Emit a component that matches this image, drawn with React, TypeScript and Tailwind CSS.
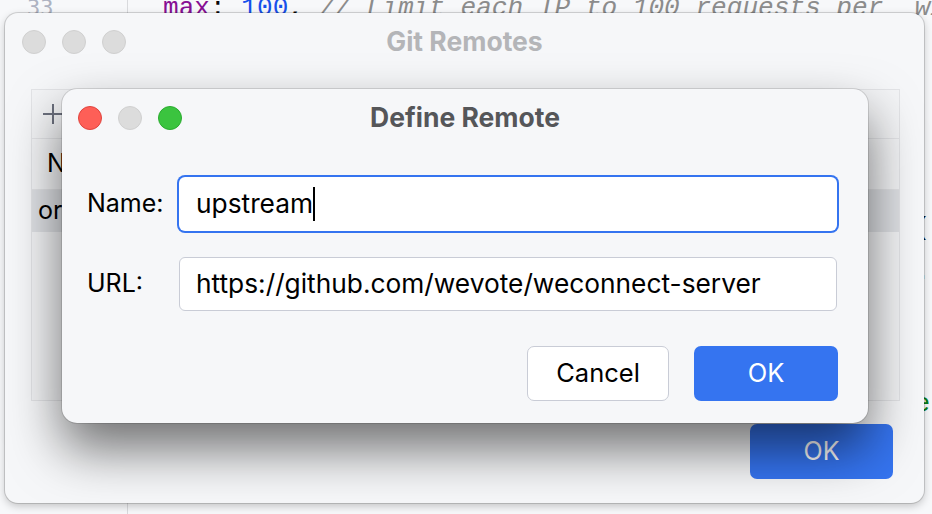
import React from "react";

/** Traffic light buttons in a macOS title bar */
function TrafficLights({ active }: { active: boolean }) {
  const dot = "h-[24px] w-[24px] rounded-full border";
  return (
    <div className="flex items-center gap-[16px]">
      <span
        className={
          active
            ? `${dot} border-[#e0443e] bg-[#fe5f57]`
            : `${dot} border-[#d0d0d0] bg-[#dcdcdc]`
        }
      />
      <span className={`${dot} border-[#d0d0d0] bg-[#dcdcdc]`} />
      <span
        className={
          active
            ? `${dot} border-[#2aac2f] bg-[#3bc43f]`
            : `${dot} border-[#d0d0d0] bg-[#dcdcdc]`
        }
      />
    </div>
  );
}

// editor lines behind the dialogs; only the edges peek out
const codeLines: { n: number; parts: [string, string][] }[] = [
  { n: 33, parts: [["max", "text-[#871094]"], [": ", "text-[#080808]"], ["100", "text-[#1750eb]"], [", ", "text-[#080808]"], ["// Limit each IP to 100 requests per `window`", "italic text-[#8c8c8c]"]] },
  { n: 34, parts: [["  standardHeaders: true, // Return rate limit in.", "italic text-[#8c8c8c]"]] },
  { n: 35, parts: [["  legacyHeaders: false, // Disable the `X-RateL:", "italic text-[#8c8c8c]"]] },
  { n: 36, parts: [["", ""]] },
  { n: 37, parts: [["", ""]] },
  { n: 38, parts: [["  app.use(limiter); // apply to all requests  st(", "text-[#080808]"]] },
  { n: 39, parts: [["  app.set('trust proxy', 1); // behind a proxy  .", "text-[#080808]"]] },
  { n: 40, parts: [["", ""]] },
  { n: 41, parts: [["", ""]] },
  { n: 42, parts: [["  app.listen(port, () => console.log(`Listening e", "text-[#067d17]"]] },
  { n: 43, parts: [["", ""]] },
  { n: 44, parts: [["", ""]] },
];

export default function App() {
  return (
    <div className="relative h-[514px] w-[932px] overflow-hidden bg-[#f7f8fa] font-['Inter',sans-serif]">
      {/* Editor behind the dialogs */}
      <div className="flex h-full">
        <div className="w-[128px] shrink-0 border-r border-[#d9dadd] pl-[27px]">
          <div className="-mt-[14px] font-['DejaVu_Sans_Mono',monospace] text-[22px] leading-[44px] text-[#aeb3c2]">
            {codeLines.map((l) => (
              <div key={l.n}>{l.n}</div>
            ))}
          </div>
        </div>
        <div className="-mt-[14px] pl-[35px] font-['Liberation_Mono',monospace] text-[26.1px] leading-[44px] whitespace-pre">
          {codeLines.map((l) => (
            <div key={l.n} className="h-[44px]">
              {l.parts.map(([t, c], i) => (
                <span key={i} className={c}>
                  {t}
                </span>
              ))}
            </div>
          ))}
        </div>
      </div>

      {/* Git Remotes window */}
      <div className="absolute left-[5px] top-[13px] flex h-[490px] w-[919px] flex-col rounded-[13px] bg-[#f6f7f9] shadow-[0_0_0_1px_rgba(0,0,0,0.14),0_3px_8px_rgba(0,0,0,0.22)]">
        <div className="relative flex h-[58px] items-center pl-[17px]">
          <TrafficLights active={false} />
          <div className="absolute inset-x-0 text-center text-[26.5px] font-bold text-[#b4b5b8]">
            Git Remotes
          </div>
        </div>
        <div className="ml-[26px] mr-[24px] mt-[18px] flex h-[312px] flex-col border border-[#e3e4e7] bg-[#f3f4f6]">
          <div className="flex h-[49px] items-center border-b border-[#e3e4e7] pl-[10px]">
            <svg width="22" height="22" viewBox="0 0 22 22" fill="none">
              <path d="M11 1v20M1 11h20" stroke="#6c707e" strokeWidth="2" />
            </svg>
          </div>
          <div className="flex h-[51px] items-center border-b border-[#e3e4e7] pl-[15px] text-[25px] text-black">
            Name
          </div>
          <div className="flex h-[42px] items-center bg-[#dfe1e5] pl-[6px] text-[25px] text-black">
            origin
          </div>
        </div>
        <div className="mr-[31px] mt-[23px] flex justify-end">
          <div className="flex h-[55px] w-[143px] items-center justify-center rounded-[7px] bg-[#3574f0] text-[25px] text-white">
            OK
          </div>
        </div>
      </div>

      {/* Define Remote dialog */}
      <div className="absolute left-[62px] top-[89px] flex h-[334px] w-[806px] flex-col rounded-[15px] bg-[#f6f7f9] shadow-[0_0_0_1px_rgba(0,0,0,0.12),0_26px_52px_rgba(0,0,0,0.55)]">
        <div className="relative flex h-[57px] items-center pl-[16px]">
          <TrafficLights active />
          <div className="absolute inset-x-0 text-center text-[26.5px] font-bold text-[#555659]">
            Define Remote
          </div>
        </div>
        <div className="flex flex-col gap-[26px] pl-[25px] pr-[31px] pt-[31px] text-[25px] text-black">
          <div className="flex items-center">
            <span className="w-[92px]">Name:</span>
            <div className="flex h-[54px] flex-1 items-center rounded-[6px] bg-white pl-[17px] text-[26.3px] ring-2 ring-[#3574f0]">
              <span>upstream</span>
              <span className="h-[34px] w-[2px] bg-black" />
            </div>
          </div>
          <div className="flex items-center">
            <span className="w-[92px]">URL:</span>
            <div className="flex h-[54px] flex-1 items-center rounded-[6px] border border-[#c9ccd6] bg-white pl-[16px] text-[26.3px]">
              https://github.com/wevote/weconnect-server
            </div>
          </div>
        </div>
        <div className="mr-[30px] mt-[35px] flex justify-end gap-[25px] text-[25.5px]">
          <div className="flex h-[55px] w-[142px] items-center justify-center rounded-[7px] border border-[#c9ccd6] bg-white text-black">
            Cancel
          </div>
          <div className="flex h-[55px] w-[144px] items-center justify-center rounded-[7px] bg-[#3574f0] text-white">
            OK
          </div>
        </div>
      </div>
    </div>
  );
}
